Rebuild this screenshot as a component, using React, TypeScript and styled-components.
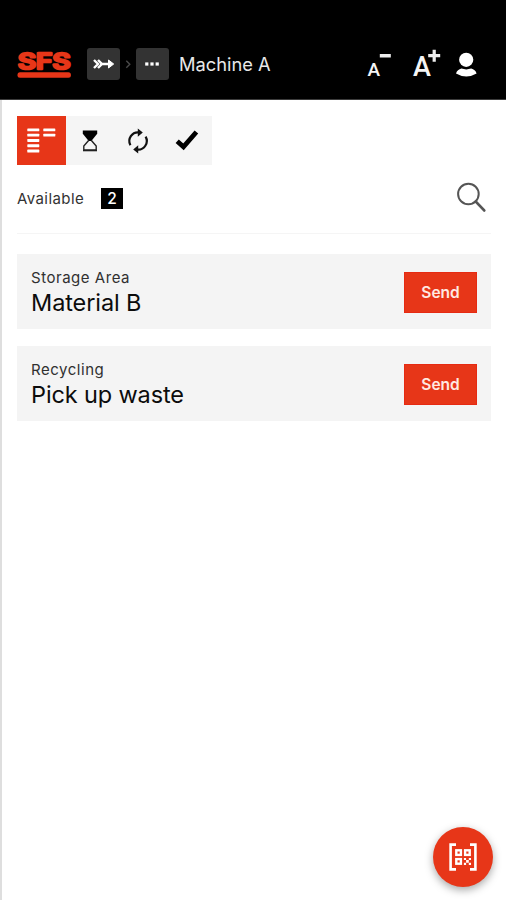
import React from 'react';
import styled, { createGlobalStyle, css } from 'styled-components';

const RED = '#e73618';

const GlobalStyle = createGlobalStyle`
  * { box-sizing: border-box; }
  body { margin: 0; background: #fff; font-family: Inter, Roboto, sans-serif; color: #0b0b0b; }
  button { font-family: inherit; border: 0; padding: 0; margin: 0; cursor: pointer; }
  svg { display: block; overflow: visible; }
`;

const Page = styled.div`
  width: 100%;
  height: 900px;
  display: flex;
  flex-direction: column;
  overflow: hidden;
`;

const Header = styled.header`
  height: 100px;
  flex: none;
  background: #000;
  border-bottom: 1px solid #3c3c3c;
  padding: 48px 28px 0 17px;
  display: flex;
  align-items: flex-start;
`;

const Logo = styled.svg`
  width: 54px;
  height: 32px;
  margin-right: 16px;
  flex: none;
`;

const CrumbButton = styled.button`
  width: 33px;
  height: 32px;
  border-radius: 3px;
  background: #333;
  display: flex;
  align-items: center;
  justify-content: center;
`;

const Chevron = styled.svg`
  width: 16px;
  height: 32px;
`;

const Title = styled.h1<{ $size: number }>`
  margin: 0 0 0 10px;
  flex: 1;
  font-size: ${(p) => p.$size}px;
  line-height: 32px;
  font-weight: 400;
  letter-spacing: 0;
  color: #e8e8e8;
  white-space: nowrap;
`;

const HeaderTools = styled.div`
  display: flex;
  height: 32px;
`;

const ToolButton = styled.button<{ $width: number }>`
  width: ${(p) => p.$width}px;
  height: 32px;
  background: none;
`;

const Content = styled.main`
  flex: 1;
  border-left: 2px solid #dedede;
  padding: 16px 15px 0 15px;
`;

const Tabs = styled.nav`
  display: flex;
  width: 195px;
  height: 49px;
  background: #f5f5f5;
`;

const Tab = styled.button<{ $active?: boolean }>`
  flex: 1;
  display: flex;
  align-items: center;
  justify-content: center;
  background: ${(p) => (p.$active ? RED : 'transparent')};
`;

const FilterBar = styled.div`
  height: 69px;
  display: flex;
  align-items: center;
  border-bottom: 1px solid #f5f5f5;
`;

const FilterLabel = styled.span`
  width: 84px;
  padding-bottom: 2px;
  font-size: 15px;
  letter-spacing: 0.42px;
  color: #333;
`;

const Count = styled.span`
  width: 22px;
  height: 21px;
  margin-bottom: 1px;
  background: #000;
  color: #fff;
  font-size: 15.5px;
  font-weight: 500;
  line-height: 21px;
  text-align: center;
`;

const SearchButton = styled.button`
  margin-left: auto;
  width: 36px;
  height: 34px;
  background: none;
`;

const List = styled.ul`
  list-style: none;
  margin: 20px 0 0;
  padding: 0;
  display: flex;
  flex-direction: column;
  gap: 17px;
`;

const Card = styled.li`
  height: 75px;
  padding: 0 14px;
  display: flex;
  align-items: center;
  justify-content: space-between;
  background: #f4f4f4;
`;

const CardText = styled.div`
  height: 51px;
`;

const Category = styled.div`
  font-size: 15px;
  line-height: 23px;
  letter-spacing: 0.53px;
  color: #303030;
`;

const Name = styled.div<{ $spacing: number }>`
  font-size: 23.5px;
  line-height: 28px;
  letter-spacing: ${(p) => p.$spacing}px;
  color: #0c0c0c;
`;

const SendButton = styled.button`
  width: 73px;
  height: 41px;
  margin-top: 2px;
  background: ${RED};
  border: 1px solid #e62a12;
  color: #ffe9e2;
  font-size: 15.5px;
  font-weight: 600;
`;

const ScanButton = styled.button`
  position: fixed;
  right: 13px;
  bottom: 13px;
  width: 60px;
  height: 60px;
  border-radius: 50%;
  background: ${RED};
  display: flex;
  align-items: center;
  justify-content: center;
  box-shadow: 0 3px 8px rgba(0, 0, 0, 0.35);
`;

const svgText = css`
  font-family: Inter, sans-serif;
`;

const LogoText = styled.text`
  ${svgText}
  font-size: 21px;
  font-weight: 500;
  fill: ${RED};
  stroke: ${RED};
  stroke-width: 2.6px;
  stroke-linejoin: round;
`;

const SizeText = styled.text<{ $size: number }>`
  font-family: Roboto, sans-serif;
  font-size: ${(p) => p.$size}px;
  font-weight: 500;
  fill: #f5f5f5;
`;

const items = [
  { category: 'Storage Area', name: 'Material B', spacing: -0.1 },
  { category: 'Recycling', name: 'Pick up waste', spacing: -0.13 },
];

const ArrowIcon = () => (
  <svg width="24" height="14" viewBox="0 0 24 14" fill="none" stroke="#fff" strokeWidth="2.4">
    <path d="M2 3l4 4-4 4M6 3l4 4-4 4M8 7h10" />
    <path d="M16.5 3l5.2 4-5.2 4z" fill="#fff" strokeWidth="1" />
  </svg>
);

const DotsIcon = () => (
  <svg width="16" height="4" viewBox="0 0 16 4" fill="#fff">
    <rect x="0.2" y="0.4" width="3.2" height="3.2" />
    <rect x="5.4" y="0.4" width="3.2" height="3.2" />
    <rect x="10.6" y="0.4" width="3.2" height="3.2" />
  </svg>
);

const ListIcon = () => (
  <svg width="29" height="26" viewBox="0 0 29 26" fill="#fff">
    {[0, 1, 2, 3, 4].map((i) => (
      <rect key={i} x="0.3" y={0.4 + i * 5.3} width="12" height="2.9" rx="0.6" />
    ))}
    <rect x="16.3" y="0.4" width="12" height="2.9" rx="0.6" />
    <rect x="16.3" y="5.7" width="12" height="2.9" rx="0.6" />
  </svg>
);

const HourglassIcon = () => (
  <svg width="16" height="24" viewBox="0 0 16 24">
    <path d="M0.8 1.4h14.4v3.4L9.3 12H6.7L0.8 4.8z" fill="#000" />
    <path d="M6.8 11.2L1.8 17v4h12.4v-4l-5-5.8" fill="none" stroke="#222" strokeWidth="1.4" />
    <path d="M1 21.6h14" stroke="#222" strokeWidth="1.4" />
  </svg>
);

const RefreshIcon = () => (
  <svg width="24" height="26" viewBox="0 0 24 26" fill="none" stroke="#111" strokeWidth="2.2">
    <path d="M3.4 17.2A8.7 8.7 0 0 1 12 4.4M18.6 8.6A8.7 8.7 0 0 1 10 21.6" />
    <path d="M10.8 0.6l5 3.9-5 4.2zM11.2 25.4l-5-3.9 5-4.2z" fill="#111" stroke="none" />
  </svg>
);

const CheckIcon = () => (
  <svg width="26" height="22" viewBox="0 0 26 22" fill="none" stroke="#000" strokeWidth="4.8">
    <path d="M2.2 11.2l6.3 5.6L21.4 2" />
  </svg>
);

const SearchIcon = () => (
  <svg width="36" height="34" viewBox="0 0 36 34" fill="none" stroke="#555">
    <circle cx="13.4" cy="12" r="10.3" strokeWidth="2" />
    <path d="M20.8 19.6l8.4 8.8" strokeWidth="2.8" strokeLinecap="round" />
  </svg>
);

const ScanIcon = () => (
  <svg width="30" height="30" viewBox="0 0 30 30" fill="none" stroke="#fff">
    <path d="M8 2.6H2.6v24.8H8M22 2.6h5.4v24.8H22" strokeWidth="2.6" />
    <rect x="8.3" y="8.3" width="4.6" height="4.6" strokeWidth="2.4" />
    <rect x="17.1" y="8.3" width="4.6" height="4.6" strokeWidth="2.4" />
    <rect x="8.3" y="17.1" width="4.6" height="4.6" strokeWidth="2.4" />
    <path
      d="M15.9 15.9h2.2v2.2h-2.2zM20.8 15.9h2.2v2.2h-2.2zM18.1 18.1h2.7v2.7h-2.7zM15.9 20.8h2.2v2.2h-2.2zM20.8 20.8h2.2v2.2h-2.2z"
      fill="#fff"
      stroke="none"
    />
  </svg>
);

export default function App() {
  return (
    <>
      <GlobalStyle />
      <Page>
        <Header>
          <Logo viewBox="0 0 54 32">
            <LogoText x="1" y="20.7" textLength="52.4" lengthAdjust="spacingAndGlyphs">
              SFS
            </LogoText>
            <rect x="0.5" y="24.3" width="53.4" height="5.5" rx="2.5" fill={RED} />
          </Logo>
          <CrumbButton aria-label="Home">
            <ArrowIcon />
          </CrumbButton>
          <Chevron viewBox="0 0 16 32" fill="none" stroke="#4a4a4a" strokeWidth="1.4">
            <path d="M6.3 12.8l3.5 3.5-3.5 3.5" />
          </Chevron>
          <CrumbButton aria-label="More">
            <DotsIcon />
          </CrumbButton>
          <Title $size={18.3}>Machine A</Title>
          <HeaderTools>
            <ToolButton $width={39} aria-label="Smaller text">
              <svg width="39" height="32" viewBox="0 0 39 32">
                <SizeText x="0.6" y="28" $size={19}>A</SizeText>
                <rect x="12.8" y="6" width="11" height="3.5" fill="#eee" />
              </svg>
            </ToolButton>
            <ToolButton $width={36} aria-label="Larger text">
              <svg width="36" height="32" viewBox="0 0 36 32">
                <SizeText x="7" y="28" $size={27}>A</SizeText>
                <path d="M28.2 1.7v12M22.2 7.7h12" stroke="#eee" strokeWidth="3.2" />
              </svg>
            </ToolButton>
            <ToolButton $width={36} aria-label="Account">
              <svg width="36" height="32" viewBox="0 0 36 32" fill="#fff">
                <circle cx="24.2" cy="11.8" r="7.1" />
                <path d="M14 25.4q1.4-3.8 5.4-4.8 4.8 1.6 9.8 0 4 1 5.4 4.8-10.3 6-20.6 0z" />
              </svg>
            </ToolButton>
          </HeaderTools>
        </Header>
        <Content>
          <Tabs>
            <Tab $active aria-label="Available">
              <ListIcon />
            </Tab>
            <Tab aria-label="Waiting">
              <HourglassIcon />
            </Tab>
            <Tab aria-label="In progress">
              <RefreshIcon />
            </Tab>
            <Tab aria-label="Done">
              <CheckIcon />
            </Tab>
          </Tabs>
          <FilterBar>
            <FilterLabel>Available</FilterLabel>
            <Count>2</Count>
            <SearchButton aria-label="Search">
              <SearchIcon />
            </SearchButton>
          </FilterBar>
          <List>
            {items.map((item) => (
              <Card key={item.name}>
                <CardText>
                  <Category>{item.category}</Category>
                  <Name $spacing={item.spacing}>{item.name}</Name>
                </CardText>
                <SendButton>Send</SendButton>
              </Card>
            ))}
          </List>
        </Content>
        <ScanButton aria-label="Scan code">
          <ScanIcon />
        </ScanButton>
      </Page>
    </>
  );
}
